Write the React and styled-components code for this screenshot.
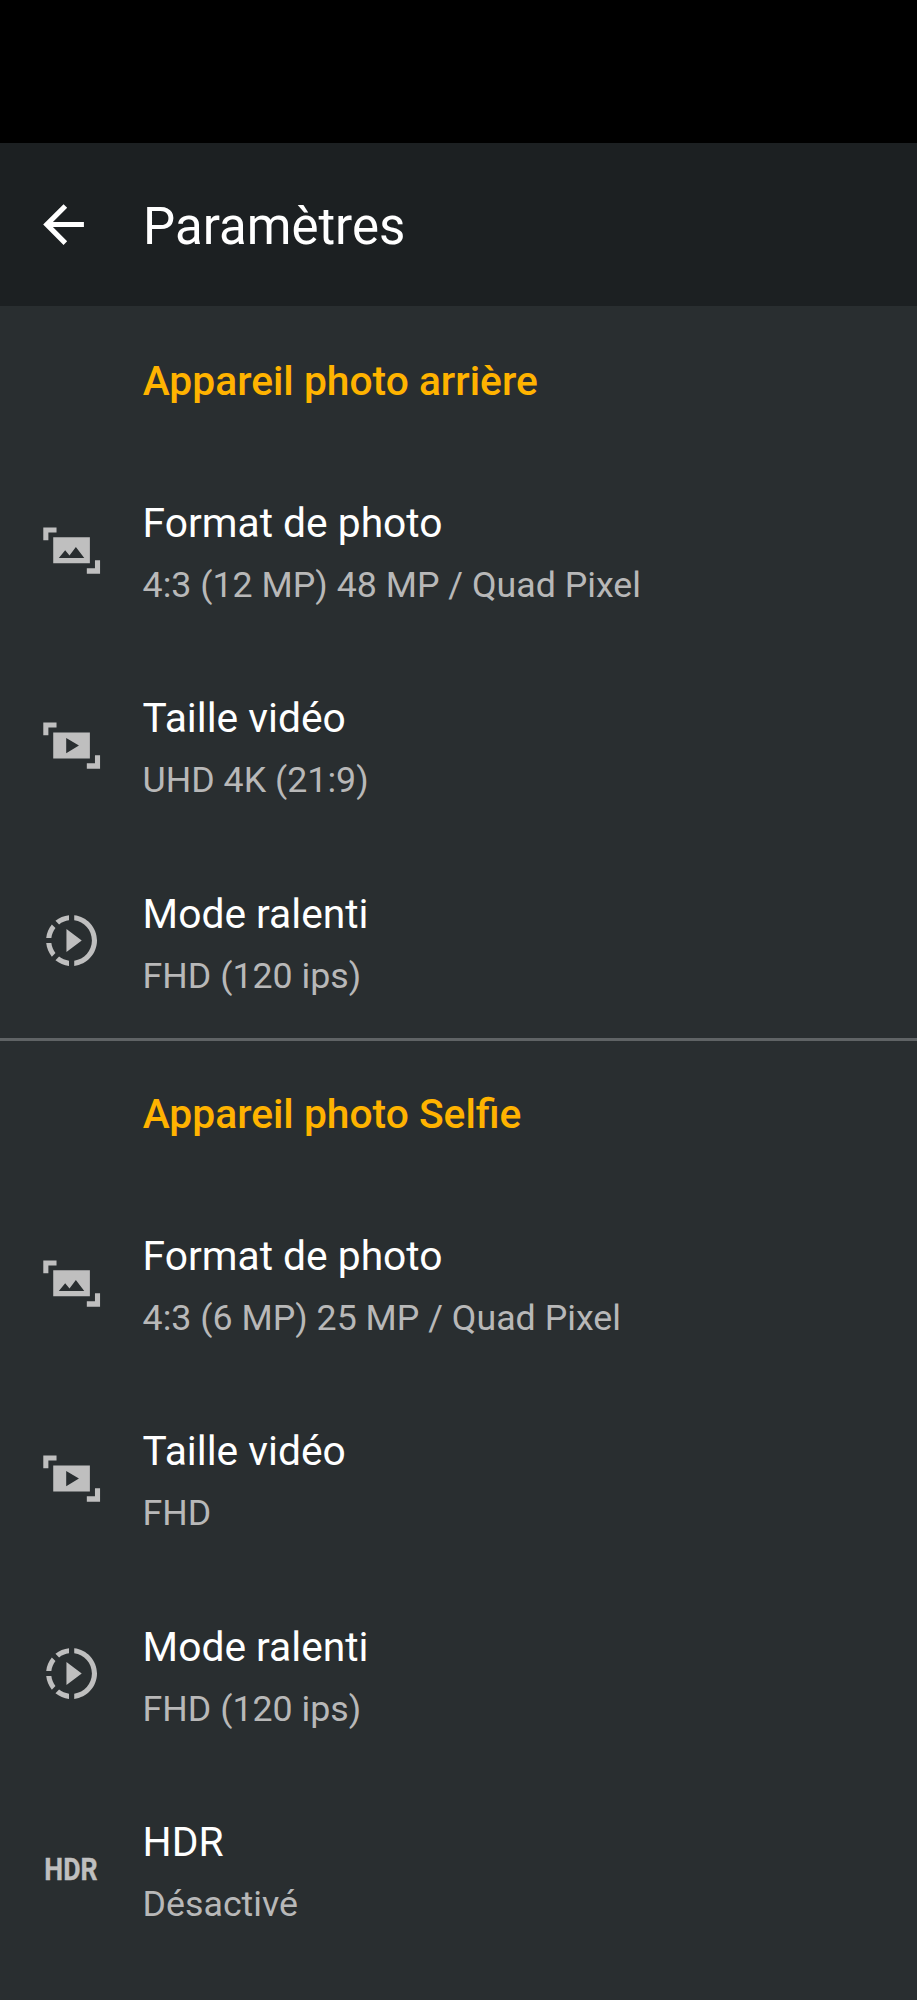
import React from "react";
import styled, { createGlobalStyle } from "styled-components";

const GlobalStyle = createGlobalStyle`
  body {
    margin: 0;
    background: #292e30;
    font-family: Roboto, "Liberation Sans", sans-serif;
  }
`;

const Screen = styled.main`
  display: flex;
  flex-direction: column;
  width: 917px;
  height: 2000px;
  overflow: hidden;
  background: #292e30;
  color: #fff;
`;

const StatusBar = styled.div`
  flex: none;
  height: 142.6px;
  background: #000;
`;

const AppBar = styled.header`
  flex: none;
  display: flex;
  align-items: center;
  height: 163px;
  box-sizing: border-box;
  padding-left: 33px;
  background: #1c2022;
`;

const BackButton = styled.button`
  display: flex;
  width: 110px;
  padding: 0.6px 0 0;
  border: 0;
  background: none;
  color: #fff;
`;

const Title = styled.h1`
  margin: 0;
  padding-top: 5.6px;
  font-size: 51px;
  font-weight: 400;
  line-height: 60px;
`;

const Section = styled.section`
  flex: none;
`;

const SectionTitle = styled.h2`
  box-sizing: border-box;
  height: ${({ $divided }) => ($divided ? "146.8px" : "146.4px")};
  margin: 0;
  padding: ${({ $divided }) => ($divided ? "48.5px" : "51.2px")} 0 0 142.7px;
  border-top: ${({ $divided }) => ($divided ? "3px solid #5f6365" : "0")};
  color: #ffb300;
  font-size: 40.75px;
  font-weight: 500;
  line-height: 48px;
`;

const Row = styled.div`
  display: flex;
  align-items: center;
  box-sizing: border-box;
  height: 195.4px;
  padding-left: 40.6px;
`;

const IconSlot = styled.div`
  flex: none;
  display: flex;
  justify-content: center;
  width: 61.1px;
  margin-right: 40.9px;
  padding-top: 0.8px;
  color: #bfbfbf;
`;

const Icon = styled.svg`
  display: block;
  width: 61.1px;
  height: 61.1px;
  fill: currentColor;
`;

const HdrMark = styled.span`
  padding-top: 1.2px;
  font-size: 31px;
  font-weight: 700;
  line-height: 36px;
  -webkit-text-stroke: 0.4px currentColor;
  transform: scaleX(0.86);
`;

const Labels = styled.div`
  display: flex;
  flex-direction: column;
  gap: 14px;
  padding-top: 8.4px;
`;

const Label = styled.div`
  font-size: 40.75px;
  line-height: 48px;
`;

const Value = styled.div`
  color: #b8b8b8;
  font-size: 35.75px;
  line-height: 48px;
`;

const BackIcon = () => (
  <Icon viewBox="0 0 24 24">
    <path d="M20 11H7.83l5.59-5.59L12 4l-8 8 8 8 1.41-1.41L7.83 13H20z" />
  </Icon>
);

const corners = "M.9 2.9h5.2v2H2.9V8h-2zM23.2 15.8v5.3H18v-2.1h3.2v-3.2z";

const PhotoSizeIcon = () => (
  <Icon viewBox="0 0 24 24">
    <path d={corners} />
    <path
      fillRule="evenodd"
      d="M4.8 6.8h14.4V17H4.8zM7 14.9h10l-3.3-4.3-2.5 3.3-1.7-2z"
    />
  </Icon>
);

const VideoSizeIcon = () => (
  <Icon viewBox="0 0 24 24">
    <path d={corners} />
    <path fillRule="evenodd" d="M4.8 6.9h14.4v10.2H4.8zM9.9 9v6l5-3z" />
  </Icon>
);

const SlowMotionIcon = () => (
  <Icon viewBox="0 0 24 24">
    <path d="M10 7.5v9l6-4.5zM11 4.07V2.05c-2.01.2-3.84 1-5.32 2.21L7.1 5.69c1.11-.86 2.44-1.44 3.9-1.62zM5.69 7.1L4.26 5.68C3.05 7.16 2.25 8.99 2.05 11h2.02c.18-1.46.76-2.79 1.62-3.9zM4.07 13H2.05c.2 2.01 1 3.84 2.21 5.32l1.43-1.43c-.86-1.1-1.44-2.43-1.62-3.89zm1.61 6.74C7.16 20.95 9 21.75 11 21.95v-2.02c-1.46-.18-2.79-.76-3.9-1.62zM22 12c0 5.16-3.92 9.42-8.95 9.95v-2.02C16.97 19.41 20 16.05 20 12s-3.03-7.41-6.95-7.93V2.05C18.08 2.58 22 6.84 22 12z" />
  </Icon>
);

const HdrIcon = () => <HdrMark>HDR</HdrMark>;

const sections = [
  {
    title: "Appareil photo arrière",
    rows: [
      [PhotoSizeIcon, "Format de photo", "4:3 (12 MP) 48 MP / Quad Pixel"],
      [VideoSizeIcon, "Taille vidéo", "UHD 4K (21:9)"],
      [SlowMotionIcon, "Mode ralenti", "FHD (120 ips)"],
    ],
  },
  {
    title: "Appareil photo Selfie",
    rows: [
      [PhotoSizeIcon, "Format de photo", "4:3 (6 MP) 25 MP / Quad Pixel"],
      [VideoSizeIcon, "Taille vidéo", "FHD"],
      [SlowMotionIcon, "Mode ralenti", "FHD (120 ips)"],
      [HdrIcon, "HDR", "Désactivé"],
    ],
  },
];

export default function App() {
  return (
    <Screen>
      <GlobalStyle />
      <StatusBar />
      <AppBar>
        <BackButton aria-label="Retour">
          <BackIcon />
        </BackButton>
        <Title>Paramètres</Title>
      </AppBar>
      {sections.map((section, i) => (
        <Section key={section.title}>
          <SectionTitle $divided={i > 0}>{section.title}</SectionTitle>
          {section.rows.map(([Glyph, label, value]) => (
            <Row key={label}>
              <IconSlot>
                <Glyph />
              </IconSlot>
              <Labels>
                <Label>{label}</Label>
                <Value>{value}</Value>
              </Labels>
            </Row>
          ))}
        </Section>
      ))}
    </Screen>
  );
}
